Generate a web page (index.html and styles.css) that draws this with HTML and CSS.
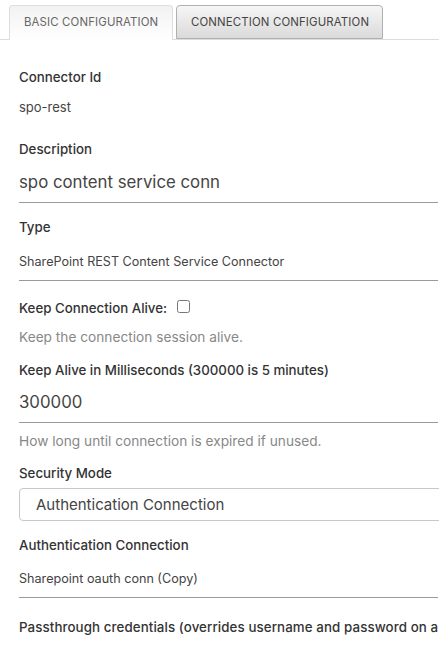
FILE: index.html
```html
<!DOCTYPE html>
<html lang="en">
<head>
<meta charset="utf-8">
<title>Connector</title>
<link rel="stylesheet" href="styles.css">
</head>
<body>
<div class="page">
  <div class="tabs">
    <div class="tab tab-active">BASIC CONFIGURATION</div>
    <div class="tab tab-idle">CONNECTION CONFIGURATION</div>
  </div>
  <div class="form">
    <div class="label l-first">Connector Id</div>
    <div class="value v-plain">spo-rest</div>

    <div class="label l-desc">Description</div>
    <div class="text-input">spo content service conn</div>

    <div class="label l-type">Type</div>
    <div class="value v-under v-type">SharePoint REST Content Service Connector</div>

    <div class="label l-keep check-row">Keep Connection Alive: <input type="checkbox" class="check"></div>
    <div class="help h-keep">Keep the connection session alive.</div>

    <div class="label l-ms">Keep Alive in Milliseconds (300000 is 5 minutes)</div>
    <div class="text-input ti-ms">300000</div>
    <div class="help h-ms">How long until connection is expired if unused.</div>

    <div class="label l-sec">Security Mode</div>
    <div class="select">Authentication Connection</div>

    <div class="label l-auth">Authentication Connection</div>
    <div class="value v-under v-auth">Sharepoint oauth conn (Copy)</div>

    <div class="label l-pass">Passthrough credentials (overrides username and password on a</div>
  </div>
</div>
</body>
</html>
```

FILE: styles.css
```css
html, body {
  margin: 0;
  padding: 0;
  background: #fff;
  overflow: hidden;
}
body {
  font-family: "Inter", "DejaVu Sans", sans-serif;
  color: #333;
}
.page {
  width: 439px;
  padding-top: 5px;
}
.tabs {
  display: flex;
  gap: 3px;
  padding-left: 9px;
  border-bottom: 1px solid #dcdcdc;
  height: 34px;
}
.tab {
  box-sizing: border-box;
  height: 35px;
  padding: 0 14px;
  font-size: 11.4px;
  letter-spacing: 0.15px;
  color: #555;
  line-height: 33px;
  border-radius: 4px 4px 0 0;
  white-space: nowrap;
  text-align: center;
}
.tab-active {
  width: 164px;
  background: linear-gradient(#f2f2f2, #ffffff);
  border: 1px solid #dedede;
  border-bottom: none;
  color: #666;
}
.tab-idle {
  width: 207px;
  background: linear-gradient(#f6f6f6, #dadada);
  border: 1px solid #b0b0b0;
  color: #444;
  height: 34px;
  line-height: 32px;
}
.form {
  padding-left: 19px;
  width: 419px;
}
.label {
  font-size: 13.3px;
  font-weight: 500;
  line-height: 20px;
  color: #333;
  white-space: nowrap;
}
.value {
  font-size: 13px;
  line-height: 20px;
  color: #444;
}
.l-first { margin-top: 27px; }
.v-plain { margin-top: 10px; }
.l-desc { margin-top: 22px; }
.text-input {
  font-size: 16.8px;
  line-height: 21px;
  color: #444;
  padding: 13px 0 9px;
  border-bottom: 1px solid #9a9a9a;
}
.ti-ms { padding-top: 12px; }
.l-type { margin-top: 14px; }
.v-under {
  border-bottom: 1px solid #9a9a9a;
}
.v-type {
  font-size: 12.6px;
  padding: 15px 0 8px;
}
.l-keep { margin-top: 17px; }
.check-row {
  display: flex;
  align-items: center;
}
.check {
  width: 13px;
  height: 13px;
  margin: 0 0 3px 10px;
}
.help {
  font-size: 13.7px;
  line-height: 20px;
  color: #888;
}
.h-keep { margin-top: 9px; }
.l-ms { margin-top: 13px; }
.h-ms { margin-top: 8px; }
.l-sec { margin-top: 12px; }
.select {
  margin-top: 5px;
  width: 440px;
  box-sizing: border-box;
  height: 33px;
  border: 1px solid #c8c8c8;
  border-radius: 4px;
  padding-left: 16px;
  font-size: 15px;
  line-height: 31px;
  color: #444;
}
.l-auth { margin-top: 14px; }
.v-auth {
  font-size: 12.6px;
  padding: 14px 0 8px;
}
.l-pass {
  margin-top: 19px;
  letter-spacing: 0.1px;
}
```
